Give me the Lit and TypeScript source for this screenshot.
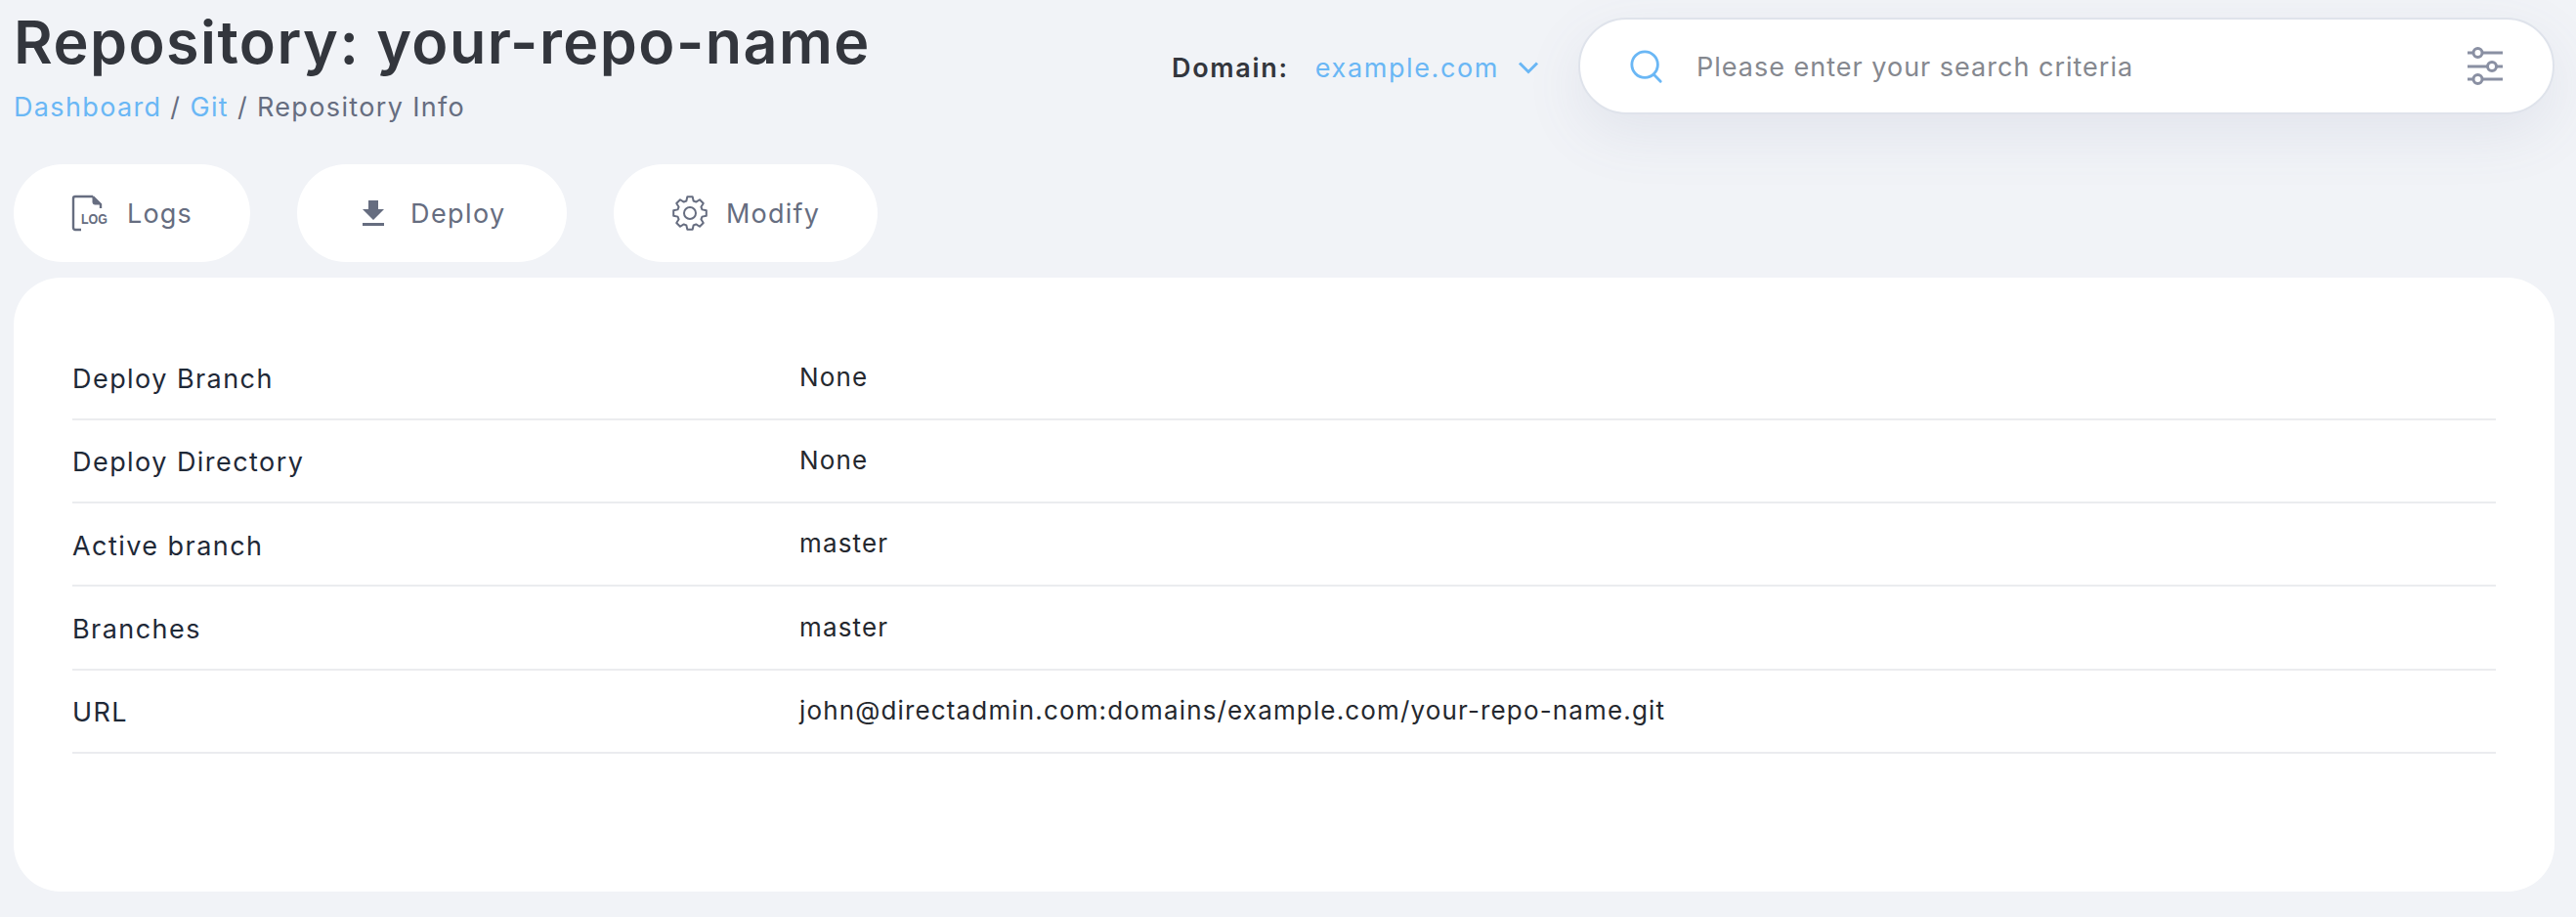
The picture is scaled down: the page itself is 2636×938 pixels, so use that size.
import { LitElement, html, css } from "lit";
import { customElement } from "lit/decorators.js";

const rows: [string, string][] = [
  ["Deploy Branch", "None"],
  ["Deploy Directory", "None"],
  ["Active branch", "master"],
  ["Branches", "master"],
  ["URL", "john@directadmin.com:domains/example.com/your-repo-name.git"],
];

const gearPath = (() => {
  const teeth = 8;
  const pts: string[] = [];
  const step = (Math.PI * 2) / teeth;
  for (let i = 0; i < teeth; i++) {
    const a = i * step - Math.PI / 2;
    const spec: [number, number][] = [
      [-0.36, 13],
      [-0.2, 17],
      [0.2, 17],
      [0.36, 13],
    ];
    for (const [off, r] of spec) {
      const t = a + off * step;
      pts.push(`${(18 + r * Math.cos(t)).toFixed(2)} ${(18 + r * Math.sin(t)).toFixed(2)}`);
    }
  }
  return "M" + pts.join("L") + "Z";
})();

@customElement("app-root")
export class AppRoot extends LitElement {
  static styles = css`
    :host { display: block; width: 2636px; height: 938px; background: #f1f3f7; font-family: Inter, "Noto Sans", sans-serif; overflow: hidden; }
    .page { padding: 0 22px 0 14px; }
    .top { display: flex; height: 168px; }
    .heading { flex: 1; }
    h1 { margin: 0; padding-top: 5px; font-size: 61px; line-height: 76px; font-weight: 600; color: #33363d; letter-spacing: 1.45px; white-space: nowrap; }
    .crumbs { font-size: 27px; line-height: 34px; color: #666d80; letter-spacing: 1.35px; margin-top: 12px; }
    .crumbs a { color: #6ab7f5; }
    .domain { display: flex; align-items: center; height: 98px; margin-top: 20px; font-size: 27px; }
    .domain b { font-weight: 600; color: #33363d; letter-spacing: 1.7px; }
    .domain span { color: #6ab7f5; margin-left: 27px; letter-spacing: 1.6px; }
    .domain svg { margin: 0 41px 0 20px; }
    .search { width: 999px; height: 99px; margin-top: 18px; box-sizing: border-box; background: #fff; border: 2px solid #dfe3eb; border-radius: 50px; box-shadow: 0 20px 60px rgba(100,110,150,.1); display: flex; align-items: center; padding: 0 51px 0 50px; color: #85888f; font-size: 27px; letter-spacing: 1px; }
    .search .ph { flex: 1; margin-left: 33px; padding-top: 2px; }
    .buttons { display: flex; gap: 48px; height: 100px; }
    .btn { background: #fff; border-radius: 50px; display: flex; align-items: center; color: #666d80; font-size: 27px; letter-spacing: 1.2px; box-sizing: border-box; padding-left: 60px; }
    .logs { width: 242px; gap: 20px; }
    .deploy { width: 276px; gap: 27px; padding-left: 67px; }
    .deploy span { letter-spacing: 1.4px; }
    .modify { width: 270px; gap: 19px; }
    .card { margin-top: 16px; width: 2600px; height: 628px; background: #fff; border-radius: 48px; box-sizing: border-box; padding: 60.5px 60px 0; }
    .row { display: grid; grid-template-columns: 744px 1fr; align-items: center; height: 85.3px; border-bottom: 2px solid #ebecef; box-sizing: border-box; font-size: 27px; color: #1f2937; letter-spacing: 1.45px; }
    .row .l { padding-top: 3px; }
    .row .v { color: #25282e; font-size: 26px; letter-spacing: 1.15px; padding-bottom: 2px; }
    svg { flex: none; display: block; overflow: visible; }
    .logtxt { font-family: "Liberation Sans", sans-serif; font-size: 14px; font-weight: 700; fill: #666d80; stroke: none; letter-spacing: 0; }
  `;
  render() {
    return html`<div class="page">
      <div class="top">
        <div class="heading">
          <h1>Repository: your-repo-name</h1>
          <div class="crumbs"><a>Dashboard</a> / <a>Git</a> / Repository Info</div>
        </div>
        <div class="domain"><b>Domain:</b><span>example.com</span>
          <svg width="20" height="12" viewBox="0 0 20 12" fill="none" stroke="#6ab7f5" stroke-width="3"><path d="M1 1.5l9 9 9-9"/></svg>
        </div>
        <div class="search">
          <svg width="36" height="36" viewBox="0 0 38 38" fill="none" stroke="#6ab7f5" stroke-width="3"><circle cx="17" cy="17" r="14"/><path d="M27 28l7 7" stroke-linecap="round"/></svg>
          <div class="ph">Please enter your search criteria</div>
          <svg width="36" height="37" viewBox="0 0 36 37" fill="none" stroke="#8a90a3" stroke-width="3"><path d="M0 5h36M0 19h36M0 32h36"/><g fill="#fff"><circle cx="10.5" cy="5" r="4.5"/><circle cx="25" cy="19" r="4.5"/><circle cx="10.5" cy="32" r="4.5"/></g></svg>
        </div>
      </div>
      <div class="buttons">
        <div class="btn logs">
          <svg width="36" height="36" viewBox="0 0 36 36" fill="none" stroke="#666d80" stroke-width="2.4"><path d="M9 35H3a2 2 0 0 1-2-2V3a2 2 0 0 1 2-2H21"/><path d="M21 1l8 8v4" /><path d="M21 1l8 8h-6a2 2 0 0 1-2-2z" fill="#666d80" stroke-width="1"/><text class="logtxt" x="9" y="29" textLength="27" lengthAdjust="spacingAndGlyphs">LOG</text></svg>
          <span>Logs</span></div>
        <div class="btn deploy">
          <svg width="22" height="26" viewBox="0 0 22 26" fill="#666d80"><path d="M6 0h10v9h6L11 20 0 9h6zM0 23h22v3H0z"/></svg>
          <span>Deploy</span></div>
        <div class="btn modify">
          <svg width="36" height="36" viewBox="0 0 36 36" fill="none" stroke="#666d80" stroke-width="2"><circle cx="18" cy="18" r="6"/><path d="${gearPath}" stroke-linejoin="round"/></svg>
          <span>Modify</span></div>
      </div>
      <div class="card">
        ${rows.map((r) => html`<div class="row"><div class="l">${r[0]}</div><div class="v">${r[1]}</div></div>`)}
      </div>
    </div>`;
  }
}
